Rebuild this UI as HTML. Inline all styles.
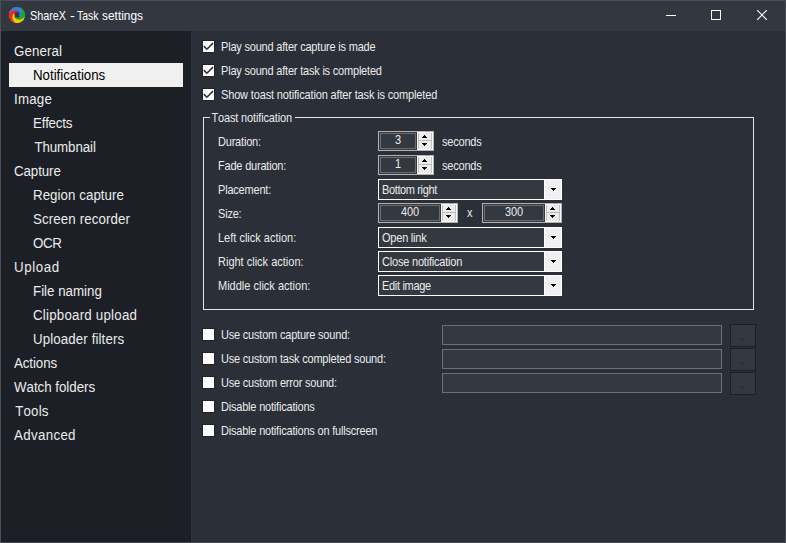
<!DOCTYPE html>
<html lang="en"><head><meta charset="utf-8"><title>ShareX - Task settings</title>
<style>
html,body{margin:0;padding:0;}
body{width:786px;height:543px;overflow:hidden;background:#2a2f38;position:relative;font-family:"Liberation Sans",sans-serif;font-size:11px;color:#ebebeb;font-kerning:none;}
div,span{box-sizing:border-box;}
.abs,.abs>*{position:absolute;}
#win{left:0;top:0;width:786px;height:543px;border:1px solid #4b4f58;border-right-color:#474b54;border-bottom-color:#454951;}
#title{left:1px;top:1px;width:784px;height:30px;background:#333740;}
#title .t{top:7px;font-kerning:normal;font-size:12.8px;line-height:16px;color:#fff;white-space:nowrap;transform-origin:0 0;}
#side{left:1px;top:31px;width:190px;height:511px;background:#1c2026;border-right:1px solid #171a20;}
#sl{left:191px;top:31px;width:1px;height:511px;background:#2e333c;}
.si{position:absolute;height:24px;line-height:24px;font-size:13.33px;white-space:nowrap;color:#ebebeb;letter-spacing:0.1px;transform:scaleY(1.06);transform-origin:0 14px;margin-top:1px;}
.sel{position:absolute;left:9px;top:63px;width:174px;height:24px;background:#f0f0f0;}
.cb{position:absolute;width:13px;height:13px;background:#fff;border:1px solid #212327;}
.lbl{position:absolute;white-space:nowrap;line-height:13px;height:13px;font-size:11px;color:#ebebeb;letter-spacing:-0.2px;margin-top:1px;transform:scaleY(1.1);transform-origin:0 10.2px;}
.nud{position:absolute;height:20px;border:1px solid #b2b2b2;background:#343941;}
.nud .in{position:absolute;left:1px;top:1px;bottom:1px;right:17px;border:1px solid #6d6d6d;background:#343941;text-align:center;line-height:13px;font-size:11px;letter-spacing:-0.2px;}
.nud .sp{position:absolute;right:0;top:0;bottom:0;width:16px;background:#fbfbfb;}
.nud .b{position:absolute;left:1px;width:14px;background:#ececec;border-left:1px solid #c4c4c4;border-right:1px solid #c4c4c4;}
.nud i{position:absolute;height:1px;background:#000;}
.combo{position:absolute;width:184px;height:21px;border:1px solid #fff;background:#343941;}
.combo .tx{position:absolute;left:3px;top:4px;line-height:13px;white-space:nowrap;transform:scaleY(1.1);transform-origin:0 10.2px;}
.combo .dd{position:absolute;right:0;top:0;bottom:0;width:17px;background:#f0f0f0;border-left:1px solid #fff;}
.combo i{position:absolute;height:1px;background:#000;}
.tb{position:absolute;width:280px;height:20px;border:1px solid #707070;background:#343941;}
.btn{position:absolute;width:26px;height:23px;border:1px solid #1c2026;background:#343941;color:#1c2026;text-align:center;font-size:11px;line-height:23px;}
</style></head><body>
<div id="win" class="abs"></div>
<div id="title" class="abs">
<svg style="left:8px;top:6px" width="16" height="16" viewBox="0 0 16 16"><path d="M0.12 6.61A8.0 8.0 0 1 1 14.93 12.00L9.48 8.86L9.87 8.49L10.17 7.97L10.35 7.32L10.35 6.56L10.12 5.74L9.62 4.91L8.84 4.16L7.76 3.58L6.42 3.28L4.88 3.34L3.22 3.88L1.58 4.95L0.12 6.61Z" fill="#2a82f0"/><path d="M9.39 0.12A8.0 8.0 0 1 1 4.00 14.93L7.14 9.48L7.51 9.87L8.03 10.17L8.68 10.35L9.44 10.35L10.26 10.12L11.09 9.62L11.84 8.84L12.42 7.76L12.72 6.42L12.66 4.88L12.12 3.22L11.05 1.58L9.39 0.12Z" fill="#15ab2b"/><path d="M15.88 9.39A8.0 8.0 0 1 1 1.07 4.00L6.52 7.14L6.13 7.51L5.83 8.03L5.65 8.68L5.65 9.44L5.88 10.26L6.38 11.09L7.16 11.84L8.24 12.42L9.58 12.72L11.12 12.66L12.78 12.12L14.42 11.05L15.88 9.39Z" fill="#fac800"/><path d="M6.61 15.88A8.0 8.0 0 0 1 9.39 0.12L8.35 6.03L7.80 5.76L7.14 5.63L6.38 5.68L5.57 5.96L4.77 6.49L4.06 7.31L3.53 8.39L3.26 9.72L3.37 11.24L3.92 12.86L4.99 14.46L6.61 15.88Z" fill="#ee2424"/><path d="M0.12 6.61A8.0 8.0 0 0 1 9.39 0.12L8.69 4.06L7.61 3.53L6.28 3.26L4.76 3.37L3.14 3.92L1.54 4.99L0.12 6.61Z" fill="#2a82f0"/><circle cx="7.9" cy="7.9" r="2.4" fill="#333740"/></svg>
<span class="t" style="left:29.4px;transform:scaleX(0.845)">ShareX</span><span class="t" style="left:69.0px;transform:scaleX(1.15)">-</span><span class="t" style="left:75.7px;transform:scaleX(0.815)">Task</span><span class="t" style="left:100.9px;transform:scaleX(0.93)">settings</span>
<svg style="left:664px;top:9px" width="12" height="12" viewBox="0 0 12 12"><path d="M1 5.5H11" stroke="#fff" stroke-width="1"/></svg>
<svg style="left:709px;top:9px" width="12" height="12" viewBox="0 0 12 12"><rect x="1.5" y="0.5" width="9" height="9" fill="none" stroke="#fff" stroke-width="1"/></svg>
<svg style="left:755px;top:9px" width="12" height="12" viewBox="0 0 12 12"><path d="M1.2 0.2L10.8 9.8M10.8 0.2L1.2 9.8" stroke="#fff" stroke-width="1.2"/></svg>
</div>
<div id="sl" class="abs"></div>
<div id="side" class="abs">
<div class="sel" style="left:8px;top:32px"></div>
<div class="si" style="left:13px;top:8px;letter-spacing:0.10px">General</div><div class="si" style="left:32px;top:32px;letter-spacing:-0.03px;color:#000">Notifications</div><div class="si" style="left:13px;top:56px;letter-spacing:0.20px">Image</div><div class="si" style="left:32px;top:80px;letter-spacing:-0.23px">Effects</div><div class="si" style="left:33.4px;top:104px;letter-spacing:-0.09px">Thumbnail</div><div class="si" style="left:13px;top:128px;letter-spacing:-0.09px">Capture</div><div class="si" style="left:32px;top:152px;letter-spacing:0.04px">Region capture</div><div class="si" style="left:32px;top:176px;letter-spacing:0.10px">Screen recorder</div><div class="si" style="left:32px;top:200px;letter-spacing:-0.40px">OCR</div><div class="si" style="left:13px;top:224px;letter-spacing:0.60px">Upload</div><div class="si" style="left:32px;top:248px;letter-spacing:-0.01px">File naming</div><div class="si" style="left:32px;top:272px;letter-spacing:0.21px">Clipboard upload</div><div class="si" style="left:32px;top:296px;letter-spacing:0.10px">Uploader filters</div><div class="si" style="left:13px;top:320px;letter-spacing:-0.10px">Actions</div><div class="si" style="left:13px;top:344px;letter-spacing:-0.03px">Watch folders</div><div class="si" style="left:14.2px;top:368px;letter-spacing:0.16px">Tools</div><div class="si" style="left:13px;top:392px;letter-spacing:0.32px">Advanced</div></div>
<div class="cb" style="left:202px;top:40px"><svg style="position:absolute;left:0;top:0" width="11" height="11" viewBox="0 0 11 11"><path d="M1.2 5.6L3.9 8.3L9.7 2.4" fill="none" stroke="#2e2e2e" stroke-width="1.5" stroke-linecap="round" stroke-linejoin="round"/></svg></div><div class="lbl" style="left:221px;top:40px">Play sound after capture is made</div>
<div class="cb" style="left:202px;top:64px"><svg style="position:absolute;left:0;top:0" width="11" height="11" viewBox="0 0 11 11"><path d="M1.2 5.6L3.9 8.3L9.7 2.4" fill="none" stroke="#2e2e2e" stroke-width="1.5" stroke-linecap="round" stroke-linejoin="round"/></svg></div><div class="lbl" style="left:221px;top:64px">Play sound after task is completed</div>
<div class="cb" style="left:202px;top:88px"><svg style="position:absolute;left:0;top:0" width="11" height="11" viewBox="0 0 11 11"><path d="M1.2 5.6L3.9 8.3L9.7 2.4" fill="none" stroke="#2e2e2e" stroke-width="1.5" stroke-linecap="round" stroke-linejoin="round"/></svg></div><div class="lbl" style="letter-spacing:-0.15px;left:221px;top:88px">Show toast notification after task is completed</div>
<div style="position:absolute;left:203px;top:117px;width:551px;height:193px;border:1px solid #e4e4e4;"></div><div class="lbl" style="left:210px;top:111px;width:85px;background:#2a2f38;padding-left:1.4px;letter-spacing:-0.14px">Toast notification</div>
<div class="lbl" style="left:218px;top:135px">Duration:</div>
<div class="lbl" style="left:218px;top:159px">Fade duration:</div>
<div class="lbl" style="left:218px;top:183px">Placement:</div>
<div class="lbl" style="left:218px;top:207px">Size:</div>
<div class="lbl" style="left:218px;top:231px;letter-spacing:0">Left click action:</div>
<div class="lbl" style="left:218px;top:255px;letter-spacing:0">Right click action:</div>
<div class="lbl" style="left:218px;top:279px;letter-spacing:0">Middle click action:</div>
<div class="nud" style="left:378px;top:131px;width:56px"><div class="in"><div style="transform:scaleY(1.1);transform-origin:0 10.2px">3</div></div><div class="sp"><div class="b" style="top:1px;height:7px"><i style="left:5px;top:2px;width:1px"></i><i style="left:4px;top:3px;width:3px"></i><i style="left:3px;top:4px;width:5px"></i></div><div style="position:absolute;left:1px;width:14px;top:8px;height:1px;background:#bcbcbc"></div><div class="b" style="top:9px;height:8px"><i style="left:3px;top:2px;width:5px"></i><i style="left:4px;top:3px;width:3px"></i><i style="left:5px;top:4px;width:1px"></i></div></div></div>
<div class="nud" style="left:378px;top:155px;width:56px"><div class="in"><div style="transform:scaleY(1.1);transform-origin:0 10.2px">1</div></div><div class="sp"><div class="b" style="top:1px;height:7px"><i style="left:5px;top:2px;width:1px"></i><i style="left:4px;top:3px;width:3px"></i><i style="left:3px;top:4px;width:5px"></i></div><div style="position:absolute;left:1px;width:14px;top:8px;height:1px;background:#bcbcbc"></div><div class="b" style="top:9px;height:8px"><i style="left:3px;top:2px;width:5px"></i><i style="left:4px;top:3px;width:3px"></i><i style="left:5px;top:4px;width:1px"></i></div></div></div>
<div class="nud" style="left:378px;top:203px;width:80px"><div class="in"><div style="transform:scaleY(1.1);transform-origin:0 10.2px">400</div></div><div class="sp"><div class="b" style="top:1px;height:7px"><i style="left:5px;top:2px;width:1px"></i><i style="left:4px;top:3px;width:3px"></i><i style="left:3px;top:4px;width:5px"></i></div><div style="position:absolute;left:1px;width:14px;top:8px;height:1px;background:#bcbcbc"></div><div class="b" style="top:9px;height:8px"><i style="left:3px;top:2px;width:5px"></i><i style="left:4px;top:3px;width:3px"></i><i style="left:5px;top:4px;width:1px"></i></div></div></div>
<div class="nud" style="left:482px;top:203px;width:80px"><div class="in"><div style="transform:scaleY(1.1);transform-origin:0 10.2px">300</div></div><div class="sp"><div class="b" style="top:1px;height:7px"><i style="left:5px;top:2px;width:1px"></i><i style="left:4px;top:3px;width:3px"></i><i style="left:3px;top:4px;width:5px"></i></div><div style="position:absolute;left:1px;width:14px;top:8px;height:1px;background:#bcbcbc"></div><div class="b" style="top:9px;height:8px"><i style="left:3px;top:2px;width:5px"></i><i style="left:4px;top:3px;width:3px"></i><i style="left:5px;top:4px;width:1px"></i></div></div></div>
<div class="lbl" style="left:442px;top:135px">seconds</div>
<div class="lbl" style="left:442px;top:159px">seconds</div>
<div class="lbl" style="left:467px;top:206px">x</div>
<div class="combo" style="left:378px;top:179px"><div class="tx" style="letter-spacing:-0.37px">Bottom right</div><div class="dd"><i style="left:6px;top:8px;width:5px"></i><i style="left:7px;top:9px;width:3px"></i><i style="left:8px;top:10px;width:1px"></i></div></div>
<div class="combo" style="left:378px;top:227px"><div class="tx" style="letter-spacing:-0.22px">Open link</div><div class="dd"><i style="left:6px;top:8px;width:5px"></i><i style="left:7px;top:9px;width:3px"></i><i style="left:8px;top:10px;width:1px"></i></div></div>
<div class="combo" style="left:378px;top:251px"><div class="tx" style="letter-spacing:-0.2px">Close notification</div><div class="dd"><i style="left:6px;top:8px;width:5px"></i><i style="left:7px;top:9px;width:3px"></i><i style="left:8px;top:10px;width:1px"></i></div></div>
<div class="combo" style="left:378px;top:275px"><div class="tx" style="letter-spacing:-0.32px">Edit image</div><div class="dd"><i style="left:6px;top:8px;width:5px"></i><i style="left:7px;top:9px;width:3px"></i><i style="left:8px;top:10px;width:1px"></i></div></div>
<div class="cb" style="left:202px;top:328px"></div><div class="lbl" style="left:221px;top:328px">Use custom capture sound:</div>
<div class="cb" style="left:202px;top:352px"></div><div class="lbl" style="left:221px;top:352px">Use custom task completed sound:</div>
<div class="cb" style="left:202px;top:376px"></div><div class="lbl" style="left:221px;top:376px">Use custom error sound:</div>
<div class="cb" style="left:202px;top:400px"></div><div class="lbl" style="left:221px;top:400px">Disable notifications</div>
<div class="cb" style="left:202px;top:424px"></div><div class="lbl" style="left:221px;top:424px">Disable notifications on fullscreen</div>
<div class="tb" style="left:442px;top:325px"></div><div class="btn" style="left:730px;top:324px">...</div>
<div class="tb" style="left:442px;top:349px"></div><div class="btn" style="left:730px;top:348px">...</div>
<div class="tb" style="left:442px;top:373px"></div><div class="btn" style="left:730px;top:372px">...</div>
</body></html>
